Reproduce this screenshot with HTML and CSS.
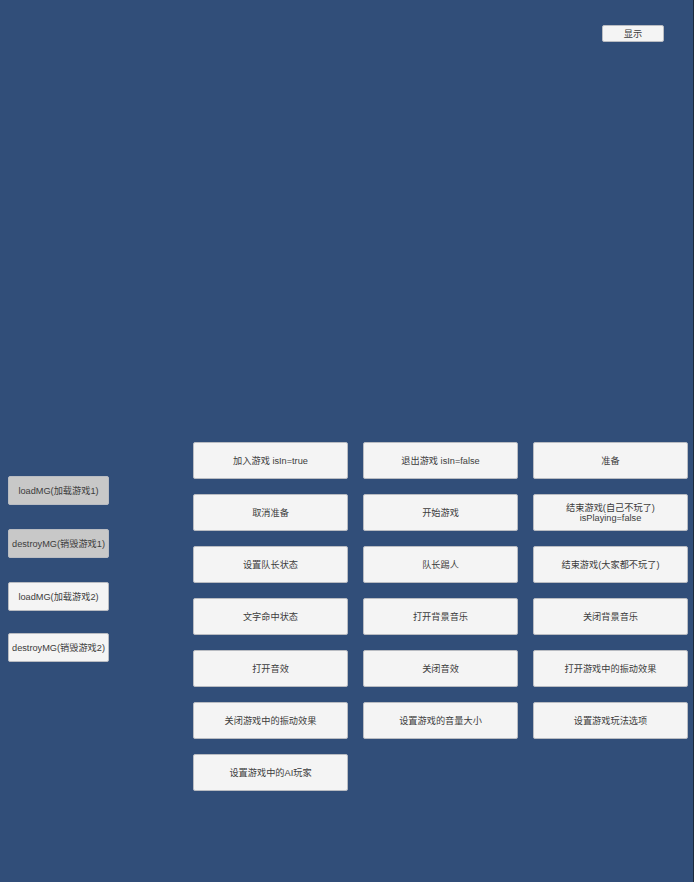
FILE: index.html
```html
<!DOCTYPE html>
<html lang="zh">
<head>
<meta charset="utf-8">
<title>MG Demo</title>
<link rel="stylesheet" href="styles.css">
</head>
<body>
<div class="screen">
  <header class="topbar">
    <button class="btn btn-show">显示</button>
  </header>
  <main class="main">
    <div class="side">
      <button class="btn btn-side btn-pressed">loadMG(加载游戏1)</button>
      <button class="btn btn-side btn-pressed">destroyMG(销毁游戏1)</button>
      <button class="btn btn-side">loadMG(加载游戏2)</button>
      <button class="btn btn-side btn-last">destroyMG(销毁游戏2)</button>
    </div>
    <div class="grid">
      <button class="btn btn-grid">加入游戏 isIn=true</button>
      <button class="btn btn-grid">退出游戏 isIn=false</button>
      <button class="btn btn-grid">准备</button>
      <button class="btn btn-grid">取消准备</button>
      <button class="btn btn-grid">开始游戏</button>
      <button class="btn btn-grid btn-two">结束游戏(自己不玩了)<br>isPlaying=false</button>
      <button class="btn btn-grid">设置队长状态</button>
      <button class="btn btn-grid">队长踢人</button>
      <button class="btn btn-grid">结束游戏(大家都不玩了)</button>
      <button class="btn btn-grid">文字命中状态</button>
      <button class="btn btn-grid">打开背景音乐</button>
      <button class="btn btn-grid">关闭背景音乐</button>
      <button class="btn btn-grid">打开音效</button>
      <button class="btn btn-grid">关闭音效</button>
      <button class="btn btn-grid">打开游戏中的振动效果</button>
      <button class="btn btn-grid">关闭游戏中的振动效果</button>
      <button class="btn btn-grid">设置游戏的音量大小</button>
      <button class="btn btn-grid">设置游戏玩法选项</button>
      <button class="btn btn-grid">设置游戏中的AI玩家</button>
    </div>
  </main>
</div>
</body>
</html>
```
FILE: styles.css
```css
html, body {
  margin: 0;
  padding: 0;
  background: #314e79;
}
.screen {
  width: 693px;
  height: 882px;
  border-right: 1px solid #1c2a3a;
  background: #314e79;
  font-family: "Liberation Sans", "Noto Sans CJK SC", sans-serif;
}
.topbar {
  display: flex;
  justify-content: flex-end;
  padding: 25px 29px 0 0;
}
.btn {
  box-sizing: border-box;
  margin: 0;
  padding: 0;
  background: #f4f4f4;
  border: 1px solid #b9bcc2;
  border-radius: 2px;
  color: #3c3c3c;
  font-family: "Liberation Sans", "Noto Sans CJK SC", sans-serif;
  font-size: 9.2px;
  line-height: 10px;
  text-align: center;
  white-space: nowrap;
  display: flex;
  align-items: center;
  justify-content: center;
}
.btn-show {
  width: 62px;
  height: 17px;
}
.main {
  display: flex;
  align-items: flex-start;
  margin-top: 400px;
  padding-left: 8px;
}
.side {
  display: flex;
  flex-direction: column;
  gap: 24px;
  margin-top: 34px;
  width: 101px;
}
.btn-side {
  width: 101px;
  height: 29px;
}
.btn-last {
  margin-top: -2px;
}
.btn-pressed {
  background: #c8c8c8;
}
.grid {
  display: grid;
  grid-template-columns: repeat(3, 155px);
  grid-auto-rows: 37px;
  gap: 15px;
  margin-left: 84px;
}
.btn-grid {
  width: 155px;
  height: 37px;
}
```
